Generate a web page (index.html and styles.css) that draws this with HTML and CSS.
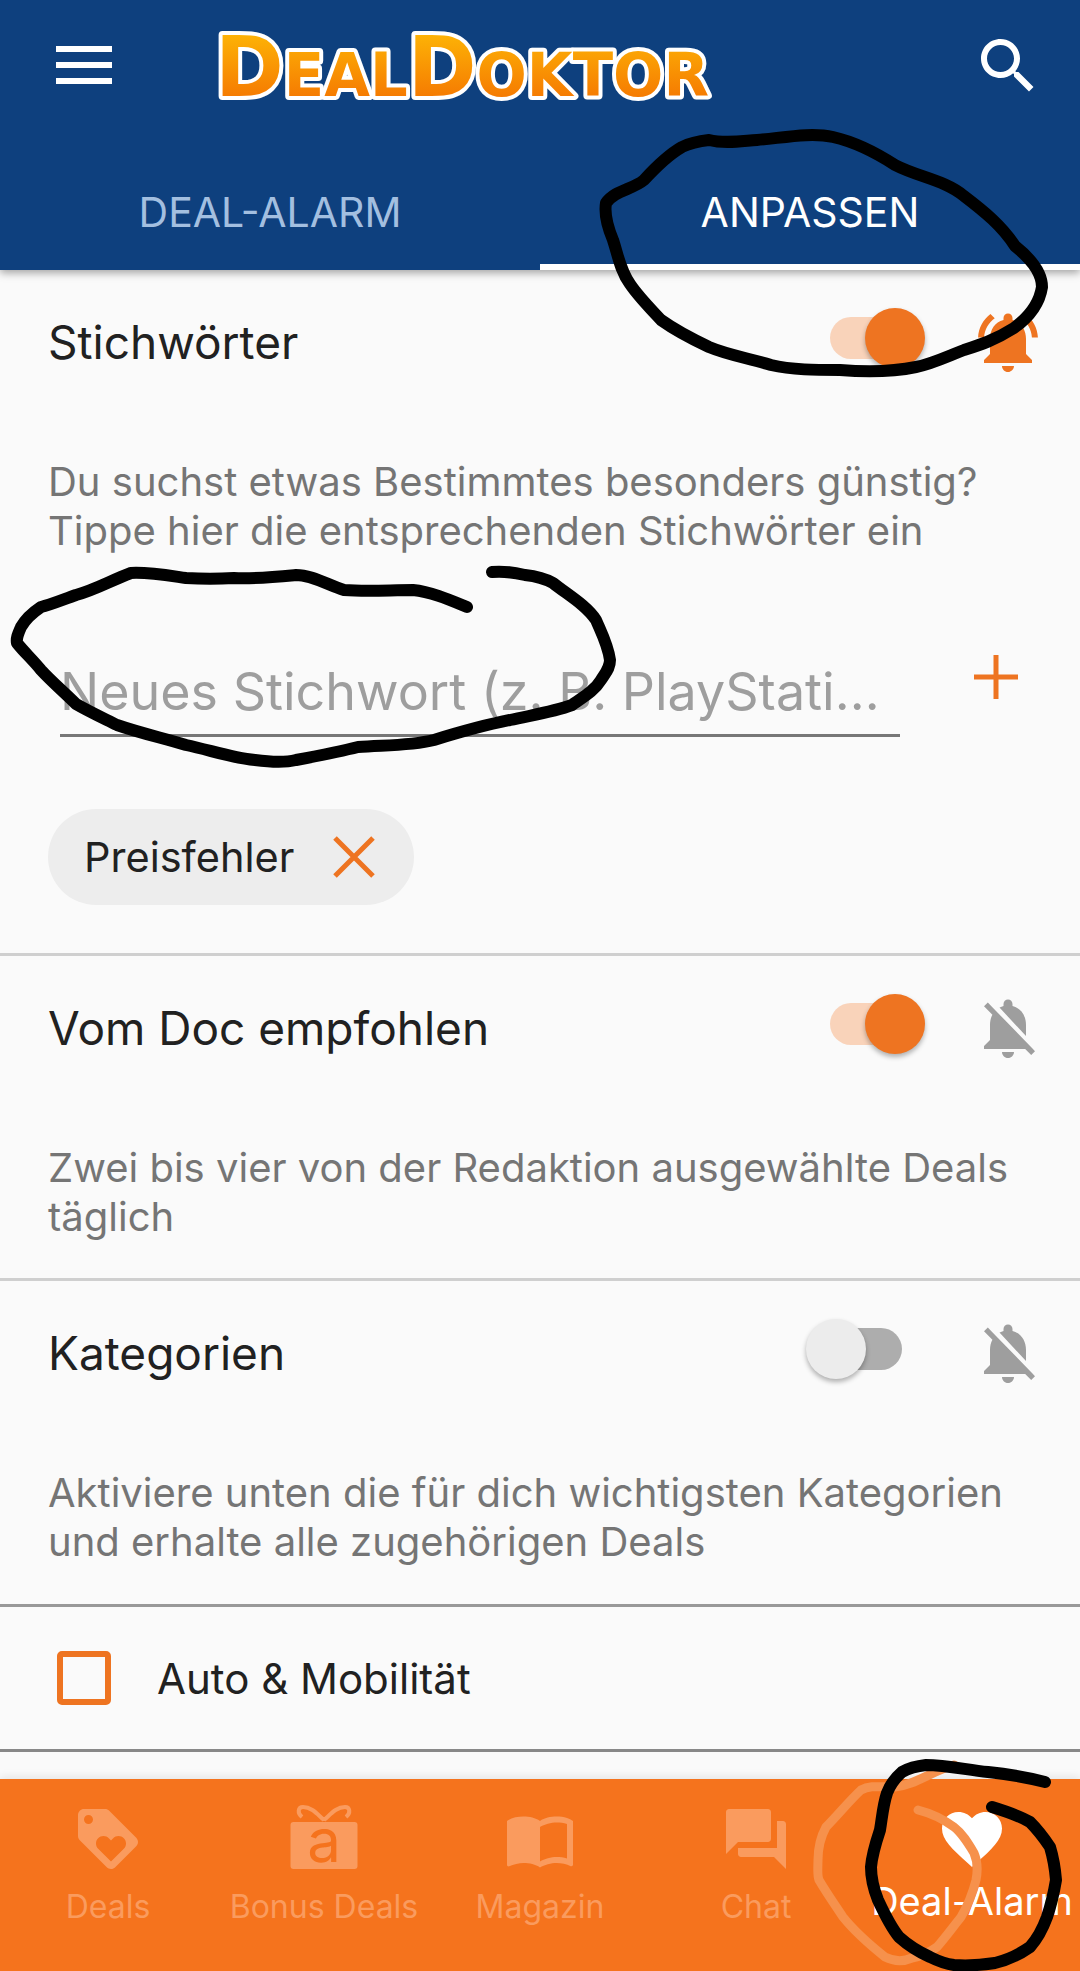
FILE: index.html
```html
<!DOCTYPE html>
<html lang="de">
<head>
    <meta charset="UTF-8">
    <meta name="viewport" content="width=device-width, initial-scale=1.0">
    <title>DealDoktor Deal-Alarm</title>
    <link rel="stylesheet" href="styles.css">
</head>
<body>
    <header class="app-header">
        <div class="top-row">
            <div class="menu-icon"><span></span><span></span><span></span></div>
            <svg class="logo" viewBox="0 0 520 110" width="520" height="110">
                <defs>
                    <linearGradient id="logoFill" x1="0" y1="0" x2="0" y2="1">
                        <stop offset="0" stop-color="#ffc107"/>
                        <stop offset="1" stop-color="#f36a00"/>
                    </linearGradient>
                </defs>
                <text class="logo-text" x="11" y="86" textLength="494" lengthAdjust="spacingAndGlyphs"><tspan class="logo-big">D</tspan>EAL<tspan class="logo-big">D</tspan>OKTOR</text>
            </svg>
            <svg class="search-icon" viewBox="0 0 24 24" width="72" height="72"><path d="M15.5 14h-.79l-.28-.27C15.41 12.59 16 11.11 16 9.5 16 5.91 13.09 3 9.5 3S3 5.91 3 9.5 5.91 16 9.5 16c1.61 0 3.09-.59 4.23-1.57l.27.28v.79l5 4.99L20.49 19l-4.99-5zm-6 0C7.01 14 5 11.99 5 9.5S7.01 5 9.5 5 14 7.01 14 9.5 11.99 14 9.5 14z"/></svg>
        </div>
        <div class="tabs">
            <div class="tab">DEAL-ALARM</div>
            <div class="tab active">ANPASSEN</div>
        </div>
    </header>

    <main class="content">
        <section class="alarm-section">
            <div class="section-head">
                <h2>Stichwörter</h2>
                <div class="toggle on"><span class="thumb"></span></div>
                <svg class="bell active" viewBox="0 0 24 24" width="72" height="72"><path d="M7.58 4.08L6.15 2.65C3.75 4.48 2.17 7.3 2.03 10.5h2c.15-2.65 1.51-4.97 3.55-6.42zm12.39 6.42h2c-.15-3.2-1.73-6.02-4.12-7.85l-1.42 1.43c2.02 1.45 3.39 3.77 3.54 6.42zM18 11c0-3.07-1.64-5.64-4.5-6.32V4c0-.83-.67-1.5-1.5-1.5s-1.5.67-1.5 1.5v.68C7.63 5.36 6 7.92 6 11v5l-2 2v1h16v-1l-2-2v-5zm-6 11c.14 0 .27-.01.4-.04.65-.14 1.18-.58 1.44-1.18.1-.24.15-.5.15-.78h-4c.01 1.1.9 2 2.01 2z"/></svg>
            </div>
            <p class="section-desc">Du suchst etwas Bestimmtes besonders günstig?<br>Tippe hier die entsprechenden Stichwörter ein</p>
            <div class="keyword-row">
                <input class="keyword-input" type="text" placeholder="Neues Stichwort (z. B. PlayStati…">
                <svg class="plus-icon" viewBox="0 0 44 44" width="44" height="44"><path d="M22 0v44M0 22h44"/></svg>
            </div>
            <div class="chip">
                <span>Preisfehler</span>
                <svg class="chip-close" viewBox="0 0 42 42" width="42" height="42"><path d="M2 2l38 38M40 2L2 40"/></svg>
            </div>
        </section>

        <section class="alarm-section">
            <div class="section-head">
                <h2>Vom Doc empfohlen</h2>
                <div class="toggle on"><span class="thumb"></span></div>
                <svg class="bell" viewBox="0 0 24 24" width="72" height="72"><path d="M20 18.69L7.84 6.14 5.27 3.49 4 4.76l2.8 2.8v.01c-.52.99-.8 2.16-.8 3.42v5l-2 2v1h13.73l2 2L21 19.72l-1-1.03zM12 22c1.11 0 2-.89 2-2h-4c0 1.11.89 2 2 2zm6-7.32V11c0-3.08-1.64-5.64-4.5-6.32V4c0-.83-.67-1.5-1.5-1.5s-1.5.67-1.5 1.5v.68c-.15.03-.29.08-.42.12-.1.03-.2.07-.3.11h-.01c-.2.08-.4.17-.59.27-.01 0-.01 0-.02.01L18 14.68z"/></svg>
            </div>
            <p class="section-desc">Zwei bis vier von der Redaktion ausgewählte Deals<br>täglich</p>
        </section>

        <section class="alarm-section dark-line">
            <div class="section-head">
                <h2>Kategorien</h2>
                <div class="toggle"><span class="thumb"></span></div>
                <svg class="bell" viewBox="0 0 24 24" width="72" height="72"><path d="M20 18.69L7.84 6.14 5.27 3.49 4 4.76l2.8 2.8v.01c-.52.99-.8 2.16-.8 3.42v5l-2 2v1h13.73l2 2L21 19.72l-1-1.03zM12 22c1.11 0 2-.89 2-2h-4c0 1.11.89 2 2 2zm6-7.32V11c0-3.08-1.64-5.64-4.5-6.32V4c0-.83-.67-1.5-1.5-1.5s-1.5.67-1.5 1.5v.68c-.15.03-.29.08-.42.12-.1.03-.2.07-.3.11h-.01c-.2.08-.4.17-.59.27-.01 0-.01 0-.02.01L18 14.68z"/></svg>
            </div>
            <p class="section-desc">Aktiviere unten die für dich wichtigsten Kategorien<br>und erhalte alle zugehörigen Deals</p>
        </section>

        <div class="category-row">
            <span class="checkbox"></span>
            <span>Auto &amp; Mobilität</span>
        </div>
    </main>

    <nav class="bottom-nav">
        <div class="nav-item">
            <svg viewBox="0 0 24 24" width="72" height="72"><path d="M21.41 11.58l-9-9C12.05 2.22 11.55 2 11 2H4c-1.1 0-2 .9-2 2v7c0 .55.22 1.05.59 1.42l9 9c.36.36.86.58 1.41.58.55 0 1.05-.22 1.41-.59l7-7c.37-.36.59-.86.59-1.41 0-.55-.23-1.06-.59-1.42zM5.5 7C4.67 7 4 6.33 4 5.5S4.67 4 5.5 4 7 4.67 7 5.5 6.33 7 5.5 7zm11.77 8.27L13 19.54l-4.27-4.27C8.28 14.81 8 14.19 8 13.5c0-1.38 1.12-2.5 2.5-2.5.69 0 1.32.28 1.77.74l.73.72.73-.73c.45-.45 1.08-.73 1.77-.73 1.38 0 2.5 1.12 2.5 2.5 0 .69-.28 1.32-.73 1.77z"/></svg>
            <span>Deals</span>
        </div>
        <div class="nav-item">
            <svg viewBox="0 0 72 72" width="72" height="72">
                <path class="gift-bow" d="M36 17C30 12 24 4 15 4C10 4 9 10 14 14M36 17C42 12 48 4 57 4C62 4 63 10 58 14"/>
                <rect x="2.5" y="19" width="67" height="47" rx="3"/>
                <text class="gift-letter" x="36" y="59">a</text>
            </svg>
            <span>Bonus Deals</span>
        </div>
        <div class="nav-item">
            <svg viewBox="0 0 24 24" width="72" height="72"><path d="M21 5c-1.11-.35-2.33-.5-3.5-.5-1.95 0-4.05.4-5.5 1.5-1.45-1.1-3.55-1.5-5.5-1.5S2.45 4.9 1 6v14.65c0 .25.25.5.5.5.1 0 .15-.05.25-.05C3.1 20.45 5.05 20 6.5 20c1.95 0 4.05.4 5.5 1.5 1.35-.85 3.8-1.5 5.5-1.5 1.65 0 3.35.3 4.75 1.05.1.05.15.05.25.05.25 0 .5-.25.5-.5V6c-.6-.45-1.25-.75-2-1zm0 13.5c-1.1-.35-2.3-.5-3.5-.5-1.7 0-4.15.65-5.5 1.5V8c1.35-.85 3.8-1.5 5.5-1.5 1.2 0 2.4.15 3.5.5v11.5z"/></svg>
            <span>Magazin</span>
        </div>
        <div class="nav-item">
            <svg viewBox="0 0 24 24" width="72" height="72"><path d="M21 6h-2v9H6v2c0 .55.45 1 1 1h11l4 4V7c0-.55-.45-1-1-1zm-4 6V3c0-.55-.45-1-1-1H3c-.55 0-1 .45-1 1v14l4-4h10c.55 0 1-.45 1-1z"/></svg>
            <span>Chat</span>
        </div>
        <div class="nav-item active">
            <svg viewBox="0 0 24 24" width="72" height="72"><path d="M12 21.35l-1.45-1.32C5.4 15.36 2 12.28 2 8.5 2 5.42 4.42 3 7.5 3c1.74 0 3.41.81 4.5 2.09C13.09 3.81 14.76 3 16.5 3 19.58 3 22 5.42 22 8.5c0 3.78-3.4 6.86-8.55 11.54L12 21.35z"/></svg>
            <span>Deal-Alarm</span>
        </div>
    </nav>

    <!-- hand drawn marks on top of the screenshot -->
    <svg class="scribbles" viewBox="0 0 1080 1971" width="1080" height="1971">
        <path class="ink-light" d="M954 1765C930 1772 915 1785 895 1787C880 1787 870 1785 861 1790C850 1800 838 1815 826 1827C820 1838 818 1850 818 1860C818 1868 817 1875 819 1880C826 1892 835 1905 843 1917C855 1932 870 1945 885 1957C895 1962 905 1961 912 1958C922 1956 930 1952 937 1947C945 1938 953 1927 961 1917C968 1905 973 1892 976 1880C978 1870 977 1860 974 1853C968 1843 962 1833 954 1827C943 1819 930 1813 918 1810"/>
        <path class="ink" d="M709 140C725 144 742 141 757 140C782 138 810 132 833 137C855 142 875 152 895 165C918 177 945 180 964 196C985 212 1002 226 1015 246C1030 258 1042 272 1042 287C1040 300 1032 315 1014 328C995 340 980 345 964 350C948 356 932 364 916 367C892 372 865 372 840 370C816 370 792 370 771 365C748 358 728 355 709 347C690 338 675 330 661 320C648 306 638 296 630 284C620 270 618 255 613 240C608 228 604 215 606 203C615 190 632 190 644 180C655 168 668 155 682 147C690 143 700 141 709 140Z"/>
        <path class="ink" d="M467 607C450 600 432 592 413 590C390 590 368 592 344 590C328 585 312 575 296 575C275 577 255 579 234 578C218 579 202 579 186 578C165 575 148 572 131 573C112 580 95 590 76 595C62 600 50 605 41 607C32 613 25 620 21 627C18 634 16 638 17 643C24 652 33 660 41 670C52 682 64 692 76 704C90 712 103 718 117 725C140 733 163 738 186 745C210 750 232 758 255 760C270 762 284 763 296 760C317 756 338 752 358 747C384 745 410 746 434 740C460 732 485 725 510 720C532 715 553 712 572 705C585 696 595 690 601 680C606 672 610 668 610 660C608 645 602 634 596 620C586 605 568 595 553 583C544 578 534 576 525 575C512 572 502 571 492 572"/>
        <path class="ink" d="M1045 1782C1026 1777 1007 1774 988 1772C967 1770 947 1765 926 1765C917 1766 909 1768 902 1772C895 1778 890 1785 887 1793C883 1805 882 1818 880 1830C876 1842 872 1855 871 1867C871 1879 874 1890 878 1900C884 1913 890 1926 899 1937C909 1946 919 1952 930 1957C938 1961 946 1964 954 1965C968 1966 982 1965 995 1963C1008 1960 1020 1954 1030 1947C1038 1938 1043 1928 1047 1917C1051 1905 1054 1892 1056 1880C1055 1868 1053 1857 1050 1847C1044 1838 1037 1829 1030 1822C1018 1815 1005 1811 992 1807"/>
    </svg>
</body>
</html>
```

FILE: styles.css
```css
* {
    margin: 0;
    padding: 0;
    box-sizing: border-box;
    font-family: Inter, Roboto, sans-serif;
}

body {
    position: relative;
    width: 1080px;
    height: 1971px;
    display: flex;
    flex-direction: column;
    overflow: hidden;
    background-color: #fafafa;
}

.app-header {
    position: relative;
    z-index: 1;
    height: 270px;
    background-color: #0e407e;
    box-shadow: 0 3px 8px rgba(0, 0, 0, 0.35);
}

.top-row {
    display: flex;
    align-items: center;
    height: 130px;
    padding-left: 56px;
}

.menu-icon {
    display: flex;
    flex-direction: column;
    justify-content: space-between;
    width: 56px;
    height: 38px;
}

.menu-icon span {
    height: 6px;
    background-color: #fff;
}

.logo {
    margin-left: 92px;
}

.logo-text {
    font-family: 'DejaVu Sans', sans-serif;
    font-weight: 700;
    font-size: 60px;
    fill: url(#logoFill);
    stroke: #fff;
    stroke-width: 8px;
    stroke-linejoin: round;
    paint-order: stroke;
}

.logo-big {
    font-family: 'DejaVu Sans', sans-serif;
    font-size: 84px;
}

.search-icon {
    margin-left: 248px;
    margin-top: 2px;
    fill: #fff;
}

.tabs {
    display: flex;
    height: 140px;
}

.tab {
    flex: 1;
    display: flex;
    align-items: center;
    justify-content: center;
    padding-top: 30px;
    border-bottom: 6px solid transparent;
    color: #a3bfe0;
    font-size: 41px;
}

.tab.active {
    color: #fff;
    border-bottom-color: #fff;
}

.content {
    flex: 1;
}

.alarm-section {
    border-bottom: 3px solid #cfcfcf;
    padding-bottom: 37px;
}

.alarm-section:first-child {
    padding-bottom: 48px;
}

.alarm-section.dark-line {
    border-bottom-color: #999;
    padding-bottom: 38px;
}

.section-head {
    display: flex;
    align-items: center;
    height: 144px;
    padding: 0 36px 0 48px;
}

.section-head h2 {
    flex: 1;
    color: #212121;
    font-size: 46px;
    font-weight: 400;
}

.toggle {
    position: relative;
    width: 72px;
    height: 42px;
    margin-right: 70px;
    margin-bottom: 8px;
    border-radius: 21px;
    background-color: #adadad;
}

.toggle.on {
    background-color: #f9d3ba;
}

.thumb {
    position: absolute;
    top: -9px;
    left: -24px;
    width: 60px;
    height: 60px;
    border-radius: 50%;
    background-color: #ececec;
    box-shadow: 0 3px 5px rgba(0, 0, 0, 0.3);
}

.toggle.on .thumb {
    left: 35px;
    background-color: #ee7421;
}

.bell {
    fill: #9e9e9e;
}

.bell.active {
    fill: #ee7421;
}

.section-desc {
    padding: 43px 36px 0 48px;
    color: #757575;
    font-size: 40px;
    line-height: 49px;
}

.keyword-row {
    display: flex;
    align-items: flex-start;
    margin-top: 102px;
    padding-left: 60px;
}

.keyword-input {
    width: 840px;
    height: 80px;
    border: none;
    border-bottom: 3px solid #777;
    outline: none;
    background: transparent;
    font-size: 52px;
    color: #212121;
    padding-bottom: 9px;
}

.keyword-input::placeholder {
    color: #9e9e9e;
    opacity: 1;
}

.plus-icon {
    margin-left: 74px;
    margin-top: -2px;
    fill: none;
    stroke: #ee7421;
    stroke-width: 5px;
}

.chip {
    display: inline-flex;
    align-items: center;
    gap: 39px;
    height: 96px;
    margin: 72px 0 0 48px;
    padding: 0 39px 0 36px;
    border-radius: 48px;
    background-color: #ededed;
    color: #212121;
    font-size: 41.5px;
}

.chip-close {
    fill: none;
    stroke: #ee7421;
    stroke-width: 5px;
}

.category-row {
    display: flex;
    align-items: center;
    gap: 46px;
    height: 145px;
    padding-left: 57px;
    border-bottom: 3px solid #888;
    color: #212121;
    font-size: 42px;
}

.checkbox {
    width: 54px;
    height: 54px;
    border: 6px solid #ee7421;
    border-radius: 5px;
}

.bottom-nav {
    display: flex;
    height: 192px;
    background-color: #f5731d;
    box-shadow: 0 -3px 8px rgba(0, 0, 0, 0.08);
}

.nav-item {
    flex: 1;
    display: flex;
    flex-direction: column;
    align-items: center;
    padding-top: 24px;
    color: #fa9b5e;
    fill: #fa9b5e;
    font-size: 32px;
    line-height: 40px;
    white-space: nowrap;
}

.nav-item span {
    margin-top: 12px;
}

.nav-item.active {
    color: #fff;
    fill: #fff;
    font-size: 38px;
}

.nav-item.active span {
    margin-top: 6px;
}

.gift-bow {
    fill: none;
    stroke: #fa9b5e;
    stroke-width: 4px;
}

.gift-letter {
    font-family: Inter, sans-serif;
    font-size: 60px;
    text-anchor: middle;
    fill: #f5731d;
}

.scribbles {
    position: absolute;
    top: 0;
    left: 0;
    z-index: 2;
    pointer-events: none;
}

.ink {
    fill: none;
    stroke: #000;
    stroke-width: 12px;
    stroke-linecap: round;
    stroke-linejoin: round;
}

.ink-light {
    fill: none;
    stroke: #f6914c;
    stroke-width: 9px;
    stroke-linecap: round;
    stroke-linejoin: round;
}
```
